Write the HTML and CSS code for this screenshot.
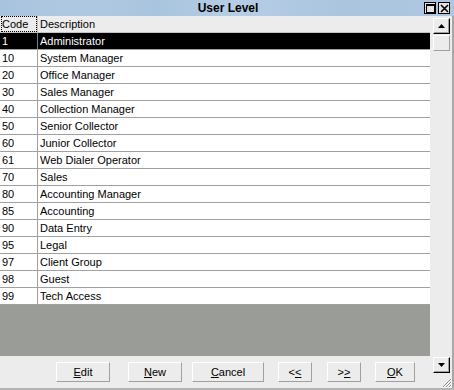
FILE: index.html
```html
<!DOCTYPE html>
<html lang="en">
<head>
    <meta charset="UTF-8">
    <title>User Level</title>
    <link rel="stylesheet" href="styles.css">
</head>
<body>
    <div class="window">
        <div class="titlebar">
            <span class="title">User Level</span>
            <div class="caption-buttons">
                <span class="cap-btn">
                    <svg width="9" height="9" viewBox="0 0 9 9"><rect x="0.5" y="0.5" width="8" height="8" fill="none" stroke="#000"/><rect x="0" y="0" width="9" height="2" fill="#000"/></svg>
                </span>
                <span class="cap-btn">
                    <svg width="9" height="9" viewBox="0 0 9 9"><path d="M1 1 L8 8 M8 1 L1 8" stroke="#000" stroke-width="1.6"/></svg>
                </span>
            </div>
        </div>

        <div class="client">
            <div class="main">
                <div class="grid">
                    <div class="row head">
                        <div class="c1"><span class="focus">Code</span></div>
                        <div class="c2">Description</div>
                    </div>
                    <div class="row selected"><div class="c1">1</div><div class="c2">Administrator</div></div>
                    <div class="row"><div class="c1">10</div><div class="c2">System Manager</div></div>
                    <div class="row"><div class="c1">20</div><div class="c2">Office Manager</div></div>
                    <div class="row"><div class="c1">30</div><div class="c2">Sales Manager</div></div>
                    <div class="row"><div class="c1">40</div><div class="c2">Collection Manager</div></div>
                    <div class="row"><div class="c1">50</div><div class="c2">Senior Collector</div></div>
                    <div class="row"><div class="c1">60</div><div class="c2">Junior Collector</div></div>
                    <div class="row"><div class="c1">61</div><div class="c2">Web Dialer Operator</div></div>
                    <div class="row"><div class="c1">70</div><div class="c2">Sales</div></div>
                    <div class="row"><div class="c1">80</div><div class="c2">Accounting Manager</div></div>
                    <div class="row"><div class="c1">85</div><div class="c2">Accounting</div></div>
                    <div class="row"><div class="c1">90</div><div class="c2">Data Entry</div></div>
                    <div class="row"><div class="c1">95</div><div class="c2">Legal</div></div>
                    <div class="row"><div class="c1">97</div><div class="c2">Client Group</div></div>
                    <div class="row"><div class="c1">98</div><div class="c2">Guest</div></div>
                    <div class="row"><div class="c1">99</div><div class="c2">Tech Access</div></div>
                </div>
                <div class="empty"></div>
                <div class="buttons">
                    <button class="btn btn-edit"><u>E</u>dit</button>
                    <button class="btn btn-new"><u>N</u>ew</button>
                    <button class="btn btn-cancel"><u>C</u>ancel</button>
                    <button class="btn btn-prev">&lt;<u>&lt;</u></button>
                    <button class="btn btn-next">&gt;<u>&gt;</u></button>
                    <button class="btn btn-ok"><u>O</u>K</button>
                </div>
            </div>

            <div class="vscroll">
                <span class="sb-btn sb-up">
                    <svg width="7" height="4" viewBox="0 0 7 4"><path d="M3.5 0 L7 4 L0 4 Z" fill="#000"/></svg>
                </span>
                <span class="sb-thumb"></span>
                <span class="sb-track"></span>
                <span class="sb-btn sb-down">
                    <svg width="7" height="4" viewBox="0 0 7 4"><path d="M0 0 L7 0 L3.5 4 Z" fill="#000"/></svg>
                </span>
                <span class="grip">
                    <svg width="11" height="11" viewBox="0 0 11 11"><path d="M10 2 L2 10 M10 5 L5 10 M10 8 L8 10" stroke="#8a8a8a" stroke-width="1"/><path d="M11 2 L2 11 M11 5 L5 11 M11 8 L8 11" stroke="#fff" stroke-width="1"/></svg>
                </span>
            </div>
        </div>
        <div class="bottom-edge"></div>
    </div>
</body>
</html>
```

FILE: styles.css
```css
* {
    margin: 0;
    padding: 0;
    box-sizing: border-box;
}

body {
    background: #ececec;
    font-family: 'Liberation Sans', Arial, sans-serif;
    font-size: 11px;
    color: #000;
}

.window {
    width: 454px;
    height: 390px;
    display: flex;
    flex-direction: column;
    background: #ececec;
}

/* caption */
.titlebar {
    position: relative;
    height: 16px;
    background: linear-gradient(to right, #a8c3de 0%, #b0c9e2 18%, #a9c4de 35%, #b6cde5 52%, #abc5df 75%, #adc7e0 100%);
    text-align: center;
}

.title {
    font-weight: bold;
    font-size: 12px;
    line-height: 16px;
    padding-left: 2px;
}

.caption-buttons {
    position: absolute;
    top: 2px;
    right: 4px;
    display: flex;
    gap: 2px;
}

.cap-btn {
    width: 12px;
    height: 12px;
    border: 1px solid #000;
    background: #e4e4e4;
    display: flex;
    align-items: center;
    justify-content: center;
}

/* client area */
.client {
    flex: 1;
    display: flex;
}

.main {
    width: 430px;
    display: flex;
    flex-direction: column;
}

.grid {
    background: #fff;
}

.row {
    display: flex;
    height: 17px;
    border-bottom: 1px solid #a0a0a0;
    line-height: 17px;
}

.row .c1 {
    width: 38px;
    padding-left: 2px;
    border-right: 1px solid #a0a0a0;
}

.row .c2 {
    flex: 1;
    padding-left: 2px;
}

.row.head {
    background: #ececec;
    border-bottom-color: #c4c4c4;
    line-height: 16px;
}

.row.head .c1 {
    padding-left: 1px;
    border-right-color: #c4c4c4;
}

.focus {
    display: inline-block;
    border: 1px dotted #000;
    line-height: 14px;
    width: 36px;
}

.row.selected {
    background: #000;
    color: #fff;
}

.row.selected .c1 {
    border-right-color: #808080;
}

.empty {
    flex: 1;
    background: #9a9c98;
}

.buttons {
    height: 32px;
    display: flex;
    align-items: center;
    padding-left: 56px;
}

.btn {
    height: 20px;
    font-family: 'Liberation Sans', Arial, sans-serif;
    font-size: 11px;
    background: #ececec;
    border: 1px solid;
    border-color: #fff #a0a0a0 #a0a0a0 #fff;
    color: #000;
}

.btn-edit { width: 54px; }
.btn-new { width: 54px; margin-left: 18px; }
.btn-cancel { width: 72px; margin-left: 10px; }
.btn-prev { width: 34px; margin-left: 14px; }
.btn-next { width: 34px; margin-left: 15px; }
.btn-ok { width: 40px; margin-left: 14px; }

/* scrollbar */
.vscroll {
    width: 24px;
    display: flex;
    flex-direction: column;
    align-items: flex-start;
    padding: 2px 0 0 3px;
    border-right: 2px solid #a8a8a8;
    position: relative;
}

.sb-btn {
    width: 17px;
    height: 16px;
    background: #ececec;
    border: 1px solid;
    border-color: #fff #000 #000 #fff;
    box-shadow: inset -1px -1px 0 #a0a0a0;
    display: flex;
    align-items: center;
    justify-content: center;
}

.sb-thumb {
    width: 17px;
    height: 16px;
    margin-top: 1px;
    border: 1px solid;
    border-color: #fff #a0a0a0 #a0a0a0 #fff;
}

.sb-track {
    flex: 1;
}

.sb-down {
    margin-bottom: 15px;
}

.grip {
    position: absolute;
    right: 0;
    bottom: 0;
    display: flex;
}

.bottom-edge {
    height: 2px;
    background: #b4b4b4;
}
```
